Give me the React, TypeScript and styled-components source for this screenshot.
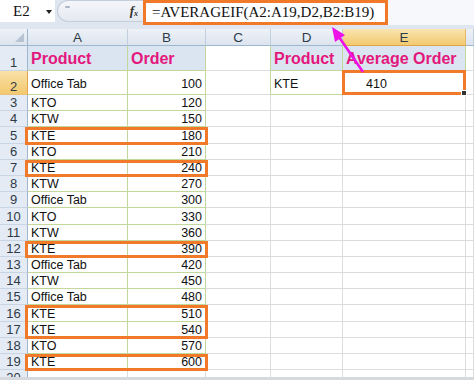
import React from 'react';
import styled, { createGlobalStyle } from 'styled-components';

const ORANGE = '#f07a2a';
const GREEN = '#c3d69b';
const GRID = '#dadcdd';
const MAGENTA = '#e3187d';

const orders: [string, number][] = [
    ['Office Tab', 100],
    ['KTO', 120],
    ['KTW', 150],
    ['KTE', 180],
    ['KTO', 210],
    ['KTE', 240],
    ['KTW', 270],
    ['Office Tab', 300],
    ['KTO', 330],
    ['KTW', 360],
    ['KTE', 390],
    ['Office Tab', 420],
    ['KTW', 450],
    ['Office Tab', 480],
    ['KTE', 510],
    ['KTE', 540],
    ['KTO', 570],
    ['KTE', 600],
];

// last column is only a sliver at the right edge, so it gets no label
const COLUMNS = ['A', 'B', 'C', 'D', 'E', ''];
const ROW_COUNT = 20;
// rows (start, end) boxed in orange over A:B
const marked: [number, number][] = [
    [5, 5],
    [7, 7],
    [12, 12],
    [16, 17],
    [19, 19],
];

const inTable = (r: number, c: number) =>
    ((c === 1 || c === 2) && r <= 19) || ((c === 4 || c === 5) && r <= 2);

type CellInfo = { text?: string; kind?: 'title' | 'num' | 'text' | 'result' };

const cellAt = (r: number, c: number): CellInfo => {
    if (r === 1) {
        const titles: Record<number, string> = { 1: 'Product', 2: 'Order', 4: 'Product', 5: 'Average Order' };
        return titles[c] ? { text: titles[c], kind: 'title' } : {};
    }
    if (r === 2 && c === 4) return { text: 'KTE', kind: 'text' };
    if (r === 2 && c === 5) return { text: '410', kind: 'result' };
    const row = orders[r - 2];
    if (!row) return {};
    if (c === 1) return { text: row[0], kind: 'text' };
    if (c === 2) return { text: String(row[1]), kind: 'num' };
    return {};
};

const GlobalStyle = createGlobalStyle`
    html, body {
        margin: 0;
        padding: 0;
        background: #fff;
        overflow: hidden;
    }
`;

export default function App() {
    const renderColumnHeads = (
        <>
            <Corner>
                <CornerMark />
            </Corner>
            {COLUMNS.map((l, i) => (
                <ColHead key={i} $col={i + 2} $active={l === 'E'}>
                    {l}
                </ColHead>
            ))}
        </>
    );

    const renderRows = Array.from({ length: ROW_COUNT }, (_, idx) => {
        const r = idx + 1;
        return (
            <React.Fragment key={r}>
                <RowHead $row={r + 1} $active={r === 2}>
                    {r}
                </RowHead>
                {COLUMNS.map((_, ci) => {
                    const c = ci + 1;
                    const info = cellAt(r, c);
                    return (
                        <Cell
                            key={c}
                            $row={r + 1}
                            $col={c + 1}
                            $kind={info.kind}
                            $fill={r === 1 && inTable(r, c)}
                            $pad={r === 1 ? 2 : r === 2 ? 3 : 0}
                            $right={inTable(r, c) || inTable(r, c + 1) ? GREEN : GRID}
                            $bottom={inTable(r, c) || inTable(r + 1, c) ? GREEN : GRID}
                        >
                            {info.text}
                        </Cell>
                    );
                })}
            </React.Fragment>
        );
    });

    return (
        <Window>
            <GlobalStyle />
            <FormulaBar>
                <NameBox>
                    E2
                    <DropArrow />
                </NameBox>
                <Grip>
                    <GripMark />
                    <Fx>
                        f<sub>x</sub>
                    </Fx>
                </Grip>
                <FormulaInput>=AVERAGEIF(A2:A19,D2,B2:B19)</FormulaInput>
                <FormulaRest />
            </FormulaBar>
            <Sheet>
                {renderColumnHeads}
                {renderRows}
                {marked.map(([a, b]) => (
                    <RowMark key={a} $from={a + 1} $to={b + 2} />
                ))}
                <ActiveCell />
            </Sheet>
            <BottomEdge />
            <Arrow viewBox="0 0 474 380" width={474} height={380}>
                <line x1={363} y1={72} x2={339} y2={37} stroke="#ee12e8" strokeWidth={2.6} />
                <polygon points="332,27 345,35 335,42" fill="#ee12e8" />
            </Arrow>
        </Window>
    );
}

const Window = styled.div`
    position: relative;
    width: 474px;
    height: 380px;
    overflow: hidden;
    display: flex;
    flex-direction: column;
    background: #fff;
    font-family: 'Liberation Sans', Arial, sans-serif;
`;

const FormulaBar = styled.div`
    height: 29px;
    flex: none;
    display: flex;
    align-items: flex-start;
    background: #dfe6ef;
`;

const NameBox = styled.div`
    width: 55px;
    height: 22px;
    box-sizing: border-box;
    padding-left: 13px;
    display: flex;
    align-items: center;
    background: #fff;
    font: 15px 'Liberation Serif', 'Times New Roman', serif;
    color: #111;
`;

const DropArrow = styled.span`
    margin-left: auto;
    margin-right: 3px;
    margin-top: 2px;
    border-left: 3px solid transparent;
    border-right: 3px solid transparent;
    border-top: 4px solid #222;
`;

const Grip = styled.div`
    margin-left: 2px;
    width: 86px;
    height: 22px;
    box-sizing: border-box;
    display: flex;
    align-items: center;
    justify-content: space-between;
    padding: 0 5px 0 7px;
    border: 1px solid #c3ceda;
    border-right: none;
    border-radius: 11px 0 0 11px;
    background: linear-gradient(#f4f6f9, #e4e9f0);
`;

const GripMark = styled.span`
    width: 5px;
    height: 2px;
    margin-bottom: 8px;
    background: #aab6c4;
    border-radius: 1px;
`;

const Fx = styled.span`
    font: italic bold 13px 'Liberation Serif', 'Times New Roman', serif;
    color: #333;

    sub {
        font-size: 8px;
        vertical-align: -1px;
    }
`;

const FormulaInput = styled.div`
    width: 245px;
    height: 25px;
    box-sizing: border-box;
    border: 3px solid ${ORANGE};
    background: #fff;
    padding-left: 6px;
    display: flex;
    align-items: center;
    font: 15px 'Liberation Serif', 'Times New Roman', serif;
    color: #111;
    white-space: nowrap;
`;

const FormulaRest = styled.div`
    flex: 1;
    height: 25px;
    background: #f6f8fb;
`;

const Sheet = styled.div`
    flex: 1;
    min-height: 0;
    overflow: hidden;
    display: grid;
    grid-template-columns: 28px 100px 78px 65px 72px 123px 1fr;
    grid-template-rows: 17px 25px 24px repeat(18, 16.2px);
`;

const Corner = styled.div`
    grid-row: 1;
    grid-column: 1;
    display: flex;
    align-items: flex-end;
    justify-content: flex-end;
    padding: 0 3px 3px 0;
    background: linear-gradient(#eef2f8, #dce4ee);
    border-right: 1px solid #9eb6ce;
    border-bottom: 1px solid #9eb6ce;
`;

const CornerMark = styled.span`
    width: 0;
    height: 0;
    border-left: 9px solid transparent;
    border-bottom: 9px solid #b6c3d3;
`;

const ColHead = styled.div<{ $col: number; $active?: boolean }>`
    grid-row: 1;
    grid-column: ${(p) => p.$col};
    display: flex;
    align-items: center;
    justify-content: center;
    font-size: 13.5px;
    color: #2e3a48;
    background: ${(p) => (p.$active ? 'linear-gradient(#f9e4b0, #f2c96f)' : 'linear-gradient(#eef2f8, #dce4ee)')};
    border-right: 1px solid ${(p) => (p.$active ? '#e2b864' : '#c2cedd')};
    border-bottom: 1px solid ${(p) => (p.$active ? '#e0a54c' : '#9eb6ce')};
`;

const RowHead = styled.div<{ $row: number; $active?: boolean }>`
    grid-row: ${(p) => p.$row};
    grid-column: 1;
    display: flex;
    align-items: flex-end;
    justify-content: center;
    font-size: 13px;
    line-height: 15px;
    color: #2e3a48;
    background: ${(p) => (p.$active ? 'linear-gradient(#f9e1a8, #f3c96e)' : '#e4ebf4')};
    border-right: 1px solid ${(p) => (p.$active ? '#e0a54c' : '#9eb6ce')};
    border-bottom: 1px solid ${(p) => (p.$active ? '#e8c27a' : '#c9d5e3')};
`;

const Cell = styled.div<{
    $row: number;
    $col: number;
    $kind?: 'title' | 'num' | 'text' | 'result';
    $fill?: boolean;
    $pad: number;
    $right: string;
    $bottom: string;
}>`
    grid-row: ${(p) => p.$row};
    grid-column: ${(p) => p.$col};
    min-width: 0;
    display: flex;
    align-items: flex-end;
    justify-content: ${(p) => (p.$kind === 'num' ? 'flex-end' : 'flex-start')};
    padding: 0 3px ${(p) => p.$pad}px ${(p) => (p.$kind === 'result' ? 23 : 3)}px;
    white-space: nowrap;
    overflow: hidden;
    background: ${(p) => (p.$fill ? '#dbe5f1' : '#fff')};
    border-right: 1px solid ${(p) => p.$right};
    border-bottom: 1px solid ${(p) => p.$bottom};
    font-size: ${(p) => (p.$kind === 'title' ? '16px' : '12.5px')};
    font-weight: ${(p) => (p.$kind === 'title' ? 700 : 400)};
    line-height: ${(p) => (p.$kind === 'title' ? '18px' : '14px')};
    color: ${(p) => (p.$kind === 'title' ? MAGENTA : '#111')};
`;

const RowMark = styled.div<{ $from: number; $to: number }>`
    grid-row: ${(p) => p.$from} / ${(p) => p.$to};
    grid-column: 2 / 4;
    position: relative;
    z-index: 2;
    margin: 0 -2px -1px -3px;
    border: 3px solid ${ORANGE};
    pointer-events: none;
`;

const ActiveCell = styled.div`
    grid-row: 3;
    grid-column: 6;
    position: relative;
    z-index: 2;
    margin: -1px 0 0 -1px;
    border: 3px solid ${ORANGE};
    pointer-events: none;

    &::after {
        content: '';
        position: absolute;
        right: -4px;
        bottom: -4px;
        width: 4px;
        height: 4px;
        background: #333;
        border: 1px solid #fff;
    }
`;

const BottomEdge = styled.div`
    height: 3px;
    flex: none;
    background: #d6d9dd;
`;

const Arrow = styled.svg`
    position: absolute;
    top: 0;
    left: 0;
    z-index: 5;
    pointer-events: none;
`;
